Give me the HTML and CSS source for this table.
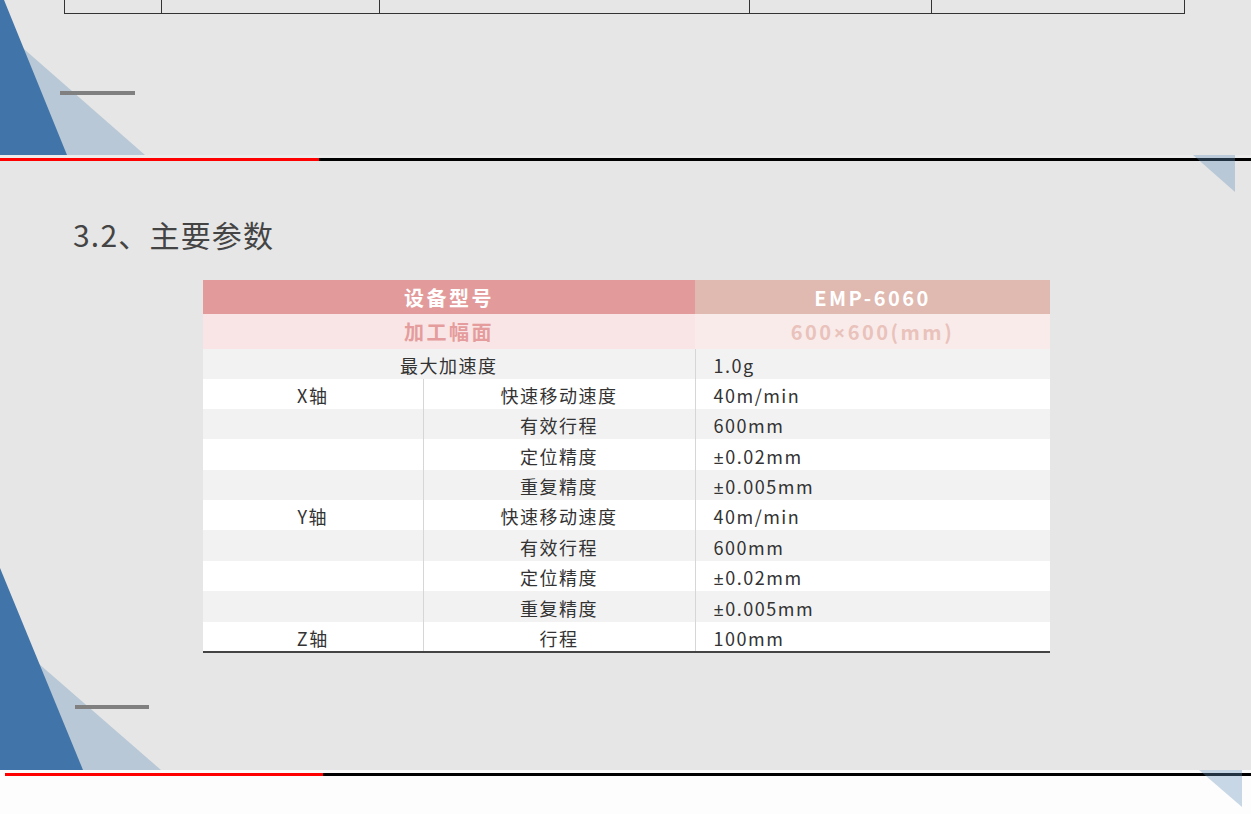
FILE: index.html
```html
<!DOCTYPE html>
<html lang="zh-CN">
<head>
<meta charset="utf-8">
<title>3.2、主要参数</title>
<link rel="stylesheet" href="styles.css">
</head>
<body>
<div class="slide slide-top">
  <svg class="decor decor-top" width="150" height="155" viewBox="0 0 150 155">
    <polygon points="0,28 145,155 0,155" fill="rgba(101,144,184,0.35)"/>
    <polygon points="0,0 4,0 67,155 0,155" fill="#4174a8"/>
  </svg>
  <div class="bar bar-top"></div>
  <div class="topgrid">
    <div class="tg c1"></div>
    <div class="tg c2"></div>
    <div class="tg c3"></div>
    <div class="tg c4"></div>
    <div class="tg c5"></div>
  </div>
</div>
<div class="gap gap-gray"></div>
<div class="rule"><span class="red"></span><span class="black"></span></div>

<div class="slide slide-main">
  <svg class="decor decor-bottom" width="170" height="609" viewBox="0 0 170 609">
    <polygon points="0,469 161,609 0,609" fill="rgba(101,144,184,0.35)"/>
    <polygon points="0,407 83,609 0,609" fill="#4174a8"/>
  </svg>
  <div class="bar bar-bottom"></div>
  <h2 class="title">3.2、主要参数</h2>
  <table class="spec">
    <colgroup><col class="w1"><col class="w2"><col class="w3"></colgroup>
    <tr class="h1"><th colspan="2" class="hl">设备型号</th><th class="hr">EMP-6060</th></tr>
    <tr class="h2"><th colspan="2" class="hl">加工幅面</th><th class="hr">600<span class="sym">×</span>600(mm)</th></tr>
    <tr class="g"><td colspan="2" class="ctr">最大加速度</td><td class="val">1.0g</td></tr>
    <tr class="w"><td class="ctr">X轴</td><td class="ctr sep">快速移动速度</td><td class="val">40m/min</td></tr>
    <tr class="g"><td></td><td class="ctr sep">有效行程</td><td class="val">600mm</td></tr>
    <tr class="w tall"><td></td><td class="ctr sep">定位精度</td><td class="val"><span class="sym">±</span>0.02mm</td></tr>
    <tr class="g"><td></td><td class="ctr sep">重复精度</td><td class="val"><span class="sym">±</span>0.005mm</td></tr>
    <tr class="w"><td class="ctr">Y轴</td><td class="ctr sep">快速移动速度</td><td class="val">40m/min</td></tr>
    <tr class="g tall"><td></td><td class="ctr sep">有效行程</td><td class="val">600mm</td></tr>
    <tr class="w"><td></td><td class="ctr sep">定位精度</td><td class="val"><span class="sym">±</span>0.02mm</td></tr>
    <tr class="g tall"><td></td><td class="ctr sep">重复精度</td><td class="val"><span class="sym">±</span>0.005mm</td></tr>
    <tr class="w last"><td class="ctr">Z轴</td><td class="ctr sep">行程</td><td class="val">100mm</td></tr>
  </table>
</div>
<div class="gap gap-white"></div>
<div class="rule rule-bottom"><span class="red"></span><span class="black"></span></div>
<div class="footer"></div>

<svg class="corner corner-top" width="42" height="37" viewBox="0 0 42 37">
  <polygon points="0,0 42,0 42,37" fill="rgba(101,144,184,0.35)"/>
</svg>
<svg class="corner corner-bottom" width="43" height="37" viewBox="0 0 43 37">
  <polygon points="0,0 43,0 43,37" fill="rgba(101,144,184,0.35)"/>
</svg>
</body>
</html>
```
FILE: styles.css
```css
* { box-sizing: border-box; }
html, body { margin: 0; padding: 0; }
body {
  width: 1251px;
  height: 814px;
  overflow: hidden;
  background: #fdfdfd;
  font-family: "Noto Sans CJK SC", "Noto Sans", sans-serif;
  color: #333;
  position: relative;
}
.slide { position: relative; background: #e6e6e6; }
.slide-top { height: 155px; }
.slide-main { height: 609px; padding-top: 53px; }
.decor { position: absolute; left: 0; top: 0; display: block; }
.bar { position: absolute; height: 4px; background: #808080; }
.bar-top { left: 60px; top: 91px; width: 75px; }
.bar-bottom { left: 75px; top: 544px; width: 74px; }

.topgrid {
  position: relative;
  margin-left: 64px;
  width: 1121px;
  height: 14px;
  display: flex;
  border-left: 1.5px solid #333;
  border-bottom: 1.5px solid #333;
}
.tg { height: 100%; border-right: 1.5px solid #333; }
.c1 { width: 97px; }
.c2 { width: 218px; }
.c3 { width: 370px; }
.c4 { width: 182px; }
.c5 { flex: 1; }

.gap { height: 3px; }
.gap-gray { background: #ececec; }
.gap-white { background: #fbfbfb; }
.rule { display: flex; height: 3px; }
.rule .red { width: 319px; background: #ff0000; }
.rule .black { flex: 1; background: #000; }
.rule-bottom { padding-left: 5px; background: #fdfdfd; }
.rule-bottom .red { width: 318px; }
.footer { height: 38px; background: #fdfdfd; }

.title {
  position: relative;
  margin: 0 0 26px 73px;
  font-size: 30px;
  line-height: 40px;
  font-weight: 400;
  color: #444;
  letter-spacing: 1.2px;
}

.spec {
  position: relative;
  margin-left: 203px;
  width: 847px;
  border-collapse: collapse;
  table-layout: fixed;
  border-bottom: 2px solid #444;
}
.w1 { width: 220px; }
.w2 { width: 272px; }
.w3 { width: 355px; }
.spec th, .spec td { padding: 0; }
.spec th {
  font-weight: 700;
  font-size: 20px;
  letter-spacing: 2.5px;
  text-align: center;
}
.h1 { height: 34px; }
.h1 .hl { background: #e29a9a; color: #fff; }
.h1 .hr { background: #e0b9b1; color: #fff; }
.h2 { height: 35px; }
.h2 .hl { background: #f9e5e5; color: #e59c9c; }
.h2 .hr { background: #f9ebea; color: #e9c2bb; }
.spec td {
  height: 30px;
  font-size: 18px;
  letter-spacing: 1.5px;
  line-height: 26px;
  color: #333;
  padding-top: 2px;
  padding-bottom: 0;
  overflow: hidden;
}
.spec .tall td { height: 31px; }
.sym { font-family: "Noto Sans", "DejaVu Sans", sans-serif; line-height: 0; }
.g td { background: #f2f2f2; }
.w td { background: #fff; }
.ctr { text-align: center; }
.sep { border-left: 1px solid #d6d6d6; }
.val { text-align: left; padding-left: 18px !important; border-left: 1px solid #d6d6d6; }

.corner { position: absolute; display: block; }
.corner-top { left: 1193px; top: 155px; }
.corner-bottom { left: 1199px; top: 770px; }
```
